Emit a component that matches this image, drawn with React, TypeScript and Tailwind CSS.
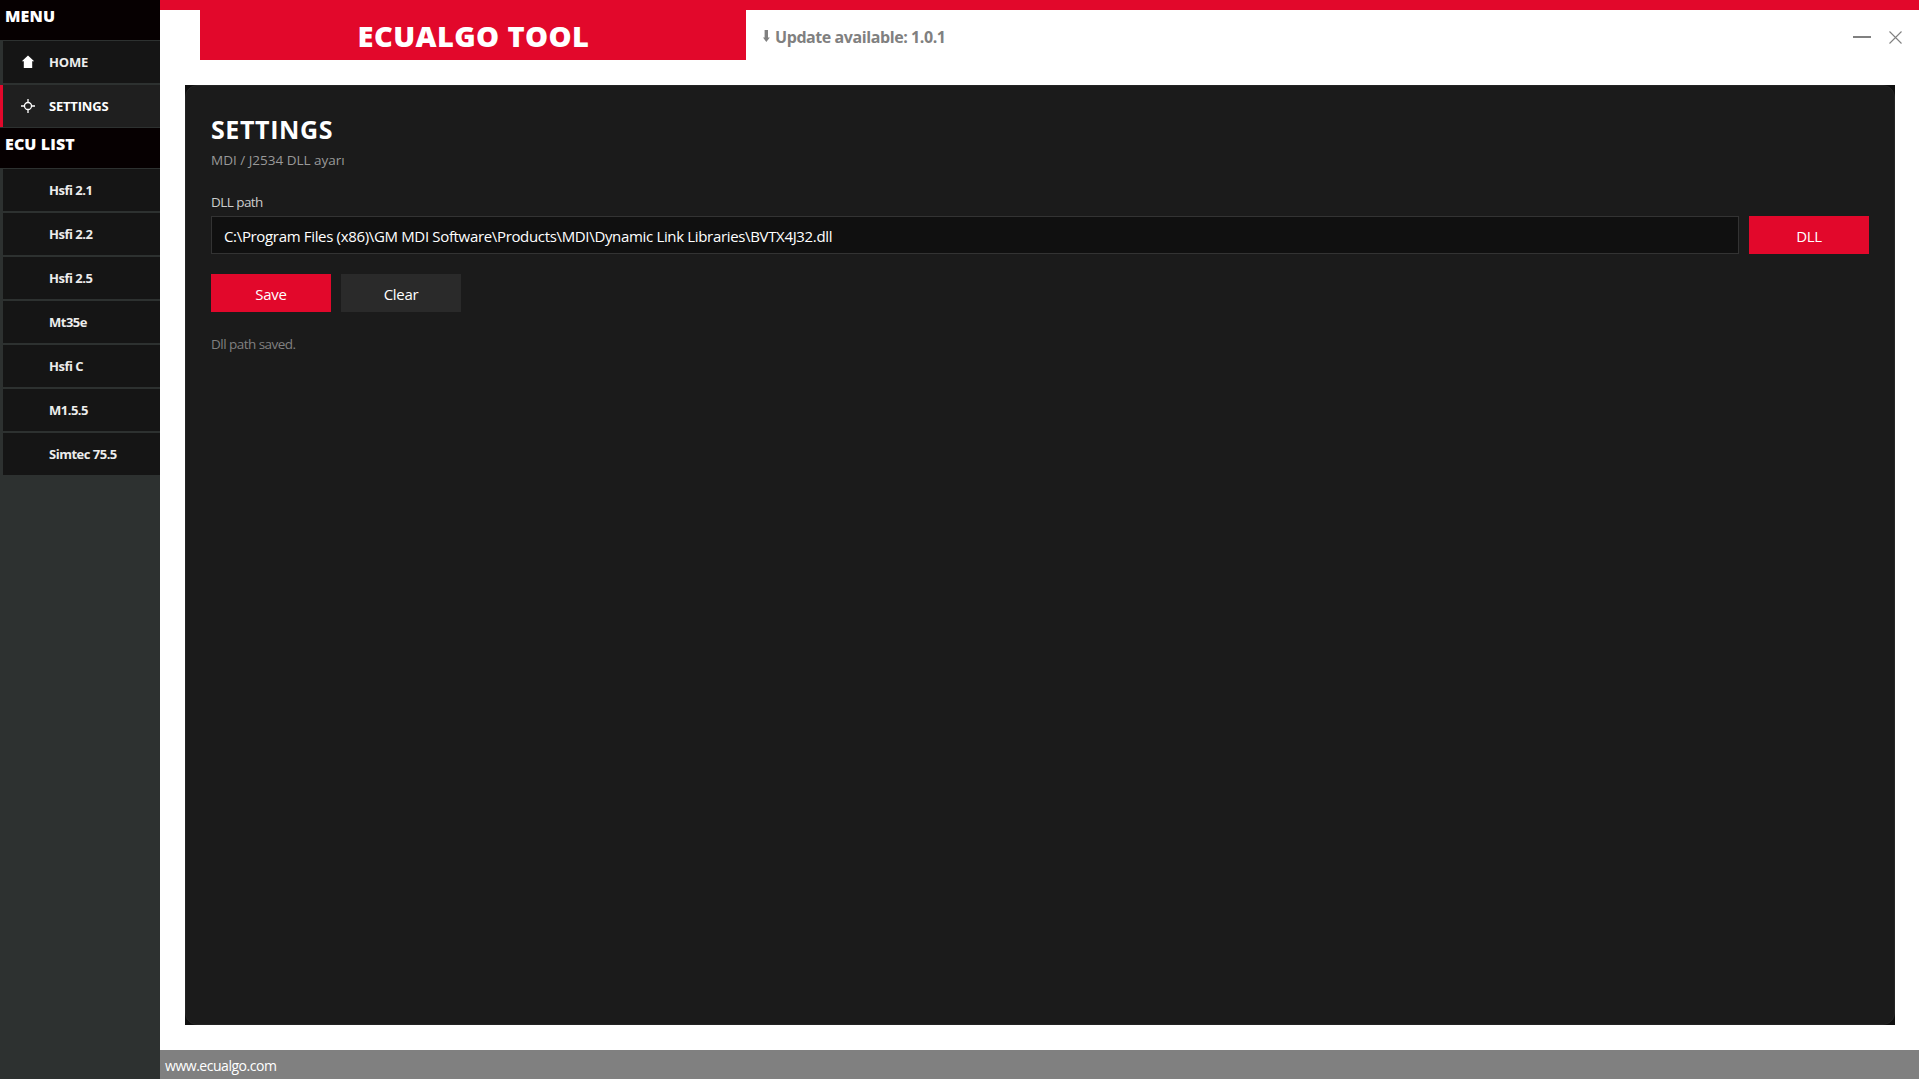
import { clsx } from "clsx";

type NavItem = {
  label: string;
  icon?: React.ElementType;
  active?: boolean;
};

const HomeIcon = () => (
  <svg width="14" height="14" viewBox="0 0 14 14" fill="white">
    <path d="M7 0.5 L13.2 6.2 H11.2 V13 H2.8 V6.2 H0.8 Z" />
  </svg>
);

const SettingsIcon = () => (
  <svg
    width="14"
    height="14"
    viewBox="0 0 14 14"
    fill="none"
    stroke="white"
    strokeWidth="1.3"
  >
    <circle cx="7" cy="7" r="3.5" />
    <path d="M7 0V4M7 10V14M0 7H4M10 7H14" />
  </svg>
);

const menuItems: NavItem[] = [
  { label: "HOME", icon: HomeIcon },
  { label: "SETTINGS", icon: SettingsIcon, active: true },
];

const ecuItems: NavItem[] = [
  { label: "Hsfi 2.1" },
  { label: "Hsfi 2.2" },
  { label: "Hsfi 2.5" },
  { label: "Mt35e" },
  { label: "Hsfi C" },
  { label: "M1.5.5" },
  { label: "Simtec 75.5" },
];

const NavSection = ({ title, items }: { title: string; items: NavItem[] }) => (
  <section>
    <h2 className="h-10 bg-[#060001] pl-[5px] text-base leading-8 font-black tracking-[0.1px] text-white">
      {title}
    </h2>
    <ul className="flex flex-col gap-[2px] py-px">
      {items.map(({ label, icon: Icon, active }) => (
        <li
          key={label}
          className={clsx(
            "flex h-[42px] items-center border-l-[3px] text-[13px] font-bold",
            active
              ? "border-[#e2082b] bg-[#1f1f1f] text-white"
              : "border-transparent bg-[#151515] bg-clip-padding text-[#ececec]",
            Icon ? "tracking-[-0.2px]" : "tracking-[-0.5px]"
          )}
        >
          <span className="flex w-[46px] justify-center pl-1">
            {Icon && <Icon />}
          </span>
          <span className="pt-[2px]">{label}</span>
        </li>
      ))}
    </ul>
  </section>
);

const Button = ({
  children,
  secondary,
}: {
  children: React.ReactNode;
  secondary?: boolean;
}) => (
  <button
    className={clsx(
      "h-[38px] w-[120px] pt-[2px] text-[15px] tracking-[-0.3px] text-white",
      secondary ? "bg-[#2a2a2a]" : "bg-[#e2082b]"
    )}
  >
    {children}
  </button>
);

const Header = () => (
  <header className="border-t-10 border-[#e2082b]">
    <div className="flex h-[50px] items-start pl-10">
      <h1 className="h-[50px] w-[546px] bg-[#e2082b] pl-px text-center text-[29px] leading-[52px] font-black tracking-[0.4px] text-white">
        ECUALGO TOOL
      </h1>
      <div className="flex h-[52px] items-center pl-[17px] text-base font-bold tracking-[-0.42px] text-[#808080]">
        <svg width="7" height="12" viewBox="0 0 7 12" fill="#808080">
          <path d="M1.6 0H5V7.5H6.8L3.3 12L0 7.5H1.6Z" />
        </svg>
        <span className="ml-[5px] pt-px">Update available: 1.0.1</span>
      </div>
      <div className="ml-auto flex h-[54px] items-center gap-[18px] pr-[17px]">
        <svg width="18" height="14" viewBox="0 0 18 14" stroke="#808080">
          <path d="M0 7H18" strokeWidth="2" />
        </svg>
        <svg width="13" height="13" viewBox="0 0 13 13" stroke="#808080">
          <path d="M0.5 0.5L12.5 12.5M12.5 0.5L0.5 12.5" strokeWidth="1.1" />
        </svg>
      </div>
    </div>
  </header>
);

const SettingsPanel = () => (
  <main className="mt-[25px] mr-6 ml-[25px] flex h-[940px] bg-[#101010]">
    <div className="flex-1 rounded-xl border border-[#242424] bg-[#1b1b1b] px-[25px] pt-[27px]">
      <h2 className="text-[25px] leading-8 font-bold tracking-[0.6px] text-white">
        SETTINGS
      </h2>
      <p className="mt-[5px] text-[13.5px] leading-5 text-[#999999]">
        MDI / J2534 DLL ayarı
      </p>
      <label className="mt-[22px] block text-[13.5px] leading-5 tracking-[-0.55px] text-[#cccccc]">
        DLL path
      </label>
      <div className="mt-1 flex gap-[10px]">
        <div className="flex h-[38px] flex-1 items-center border border-[#333333] bg-[#101010] pt-[2px] pl-3 text-[15px] tracking-[-0.335px] text-white">
          {"C:\\Program Files (x86)\\GM MDI Software\\Products\\MDI\\Dynamic Link Libraries\\BVTX4J32.dll"}
        </div>
        <Button>DLL</Button>
      </div>
      <div className="mt-5 flex gap-[10px]">
        <Button>Save</Button>
        <Button secondary>Clear</Button>
      </div>
      <p className="mt-[22px] text-[13.5px] leading-5 tracking-[-0.53px] text-[#808080]">
        Dll path saved.
      </p>
    </div>
  </main>
);

export default function App() {
  return (
    <div className="flex h-[1079px] w-[1919px] overflow-hidden bg-white font-['Open_Sans','Noto_Sans',sans-serif]">
      <aside className="w-40 shrink-0 bg-[#2d3130]">
        <NavSection title="MENU" items={menuItems} />
        <NavSection title="ECU LIST" items={ecuItems} />
      </aside>
      <div className="flex flex-1 flex-col">
        <Header />
        <SettingsPanel />
        <footer className="mt-auto h-[29px] bg-[#808080] pt-px pl-[5px] text-sm leading-[30px] tracking-[-0.47px] text-white">
          www.ecualgo.com
        </footer>
      </div>
    </div>
  );
}
